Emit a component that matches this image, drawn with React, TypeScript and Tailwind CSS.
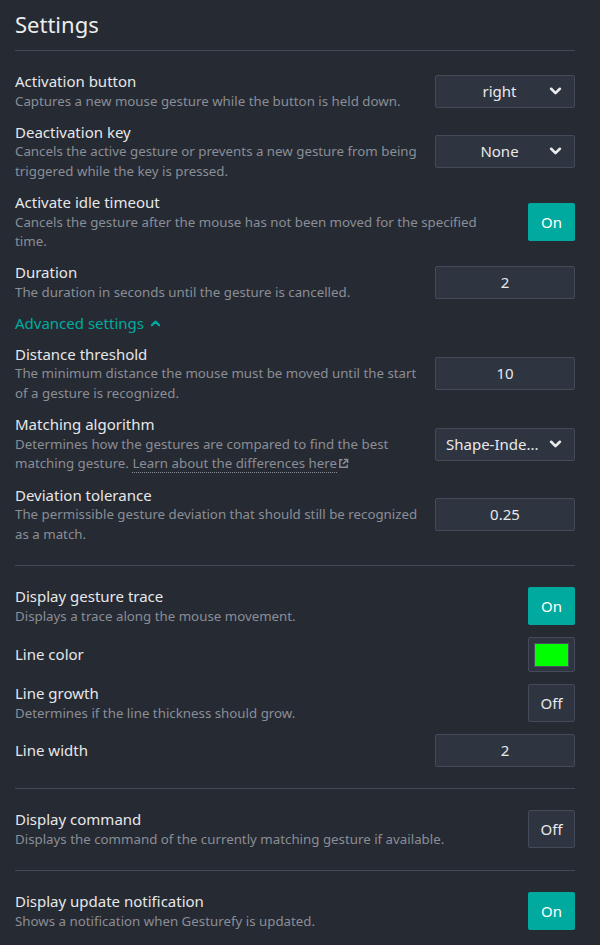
import type { ReactNode } from 'react';

const labelFont = { fontFamily: '"Noto Sans", "Open Sans", sans-serif' };

function Chevron({ up = false, className = '' }: { up?: boolean; className?: string }) {
  return (
    <svg viewBox="0 0 12 8" className={className} fill="none" stroke="currentColor" strokeWidth="2.4" strokeLinecap="round" strokeLinejoin="round">
      {up ? <path d="M2 6.5 6 2.5 10 6.5" /> : <path d="M2 1.5 6 5.5 10 1.5" />}
    </svg>
  );
}

function ExternalIcon() {
  return (
    <svg viewBox="0 0 12 12" className="ml-[1px] inline-block h-[11px] w-[11px] align-[-1px]" fill="none" stroke="currentColor" strokeWidth="1.6">
      <path d="M5 2H2v8h8V7" />
      <path d="M6.5 1.5h4v4M10.5 1.5 5.5 6.5" />
    </svg>
  );
}

function Row({ title, desc, children }: { title: string; desc?: ReactNode; children: ReactNode }) {
  return (
    <div className="flex items-center justify-between gap-[15px]">
      <div className="min-w-0 max-w-[468px] flex-1">
        <div className="text-[15px] leading-[20.5px] text-[#e6e7e9]">{title}</div>
        {desc && <div className="text-[13.3px] leading-[19.5px] text-[#8a8e96]">{desc}</div>}
      </div>
      <div className="shrink-0">{children}</div>
    </div>
  );
}

function Select({ value, left = false }: { value: string; left?: boolean }) {
  return (
    <div className={`flex h-[33px] w-[140px] items-center rounded-[2px] border border-[#444a59] bg-[#2f3441] text-[15px] text-[#e8e9eb] ${left ? 'pl-[10px]' : ''}`}>
      <span className={`flex-1 ${left ? 'text-left' : 'pl-[14px] text-center'}`}>{value}</span>
      <Chevron className="mr-[12px] h-[9px] w-[13px] text-[#e8e9eb]" />
    </div>
  );
}

function NumberInput({ value }: { value: string }) {
  return (
    <div className="flex h-[33px] w-[140px] items-center justify-center rounded-[2px] border border-[#444a59] bg-[#2f3441] text-[15px] text-[#e8e9eb]">
      {value}
    </div>
  );
}

function Toggle({ on }: { on: boolean }) {
  return on ? (
    <div className="flex h-[38px] w-[47px] items-center justify-center rounded-[2px] bg-[#00aa9f] text-[15px] text-white">On</div>
  ) : (
    <div className="flex h-[38px] w-[47px] items-center justify-center rounded-[2px] border border-[#444a59] bg-[#2f3441] text-[15px] text-[#e8e9eb]">Off</div>
  );
}

function ColorButton() {
  return (
    <div className="flex h-[35px] w-[47px] items-center justify-center rounded-[2px] border border-[#444a59] bg-[#2f3441]">
      <div className="h-[24px] w-[35px] border border-[#4a5060] bg-[#00ff00]" />
    </div>
  );
}

function Divider() {
  return <div className="h-px bg-[#444955]" />;
}

export default function App() {
  return (
    <div className="min-h-[945px] bg-[#262a33] pl-[15px] pr-[25px]" style={labelFont}>
      <h1 className="pt-[10px] pb-[12px] text-[22px] leading-[28px] text-[#eceded]">Settings</h1>
      <Divider />

      <div className="flex flex-col gap-[10.8px] pt-[20px] pb-[21px]">
        <Row title="Activation button" desc="Captures a new mouse gesture while the button is held down.">
          <Select value="right" />
        </Row>
        <Row title="Deactivation key" desc="Cancels the active gesture or prevents a new gesture from being triggered while the key is pressed.">
          <Select value="None" />
        </Row>
        <Row title="Activate idle timeout" desc="Cancels the gesture after the mouse has not been moved for the specified time.">
          <Toggle on />
        </Row>
        <Row title="Duration" desc="The duration in seconds until the gesture is cancelled.">
          <NumberInput value="2" />
        </Row>
        <div className="flex items-center gap-[6px] text-[15px] leading-[20px] text-[#00aa9f]">
          Advanced settings
          <Chevron up className="h-[8px] w-[11px]" />
        </div>
        <Row title="Distance threshold" desc="The minimum distance the mouse must be moved until the start of a gesture is recognized.">
          <NumberInput value="10" />
        </Row>
        <Row
          title="Matching algorithm"
          desc={
            <>
              Determines how the gestures are compared to find the best matching gesture.{' '}
              <span className="border-b border-dotted border-[#8a8e96]">Learn about the differences here</span>
              <ExternalIcon />
            </>
          }
        >
          <Select value="Shape-Inde..." left />
        </Row>
        <Row title="Deviation tolerance" desc="The permissible gesture deviation that should still be recognized as a match.">
          <NumberInput value="0.25" />
        </Row>
      </div>
      <Divider />

      <div className="flex flex-col gap-[11px] pt-[20px] pb-[21px]">
        <Row title="Display gesture trace" desc="Displays a trace along the mouse movement.">
          <Toggle on />
        </Row>
        <Row title="Line color">
          <ColorButton />
        </Row>
        <Row title="Line growth" desc="Determines if the line thickness should grow.">
          <Toggle on={false} />
        </Row>
        <Row title="Line width">
          <NumberInput value="2" />
        </Row>
      </div>
      <Divider />

      <div className="pt-[20px] pb-[21px]">
        <Row title="Display command" desc="Displays the command of the currently matching gesture if available.">
          <Toggle on={false} />
        </Row>
      </div>
      <Divider />

      <div className="pt-[20px] pb-[14px]">
        <Row title="Display update notification" desc="Shows a notification when Gesturefy is updated.">
          <Toggle on />
        </Row>
      </div>
    </div>
  );
}
